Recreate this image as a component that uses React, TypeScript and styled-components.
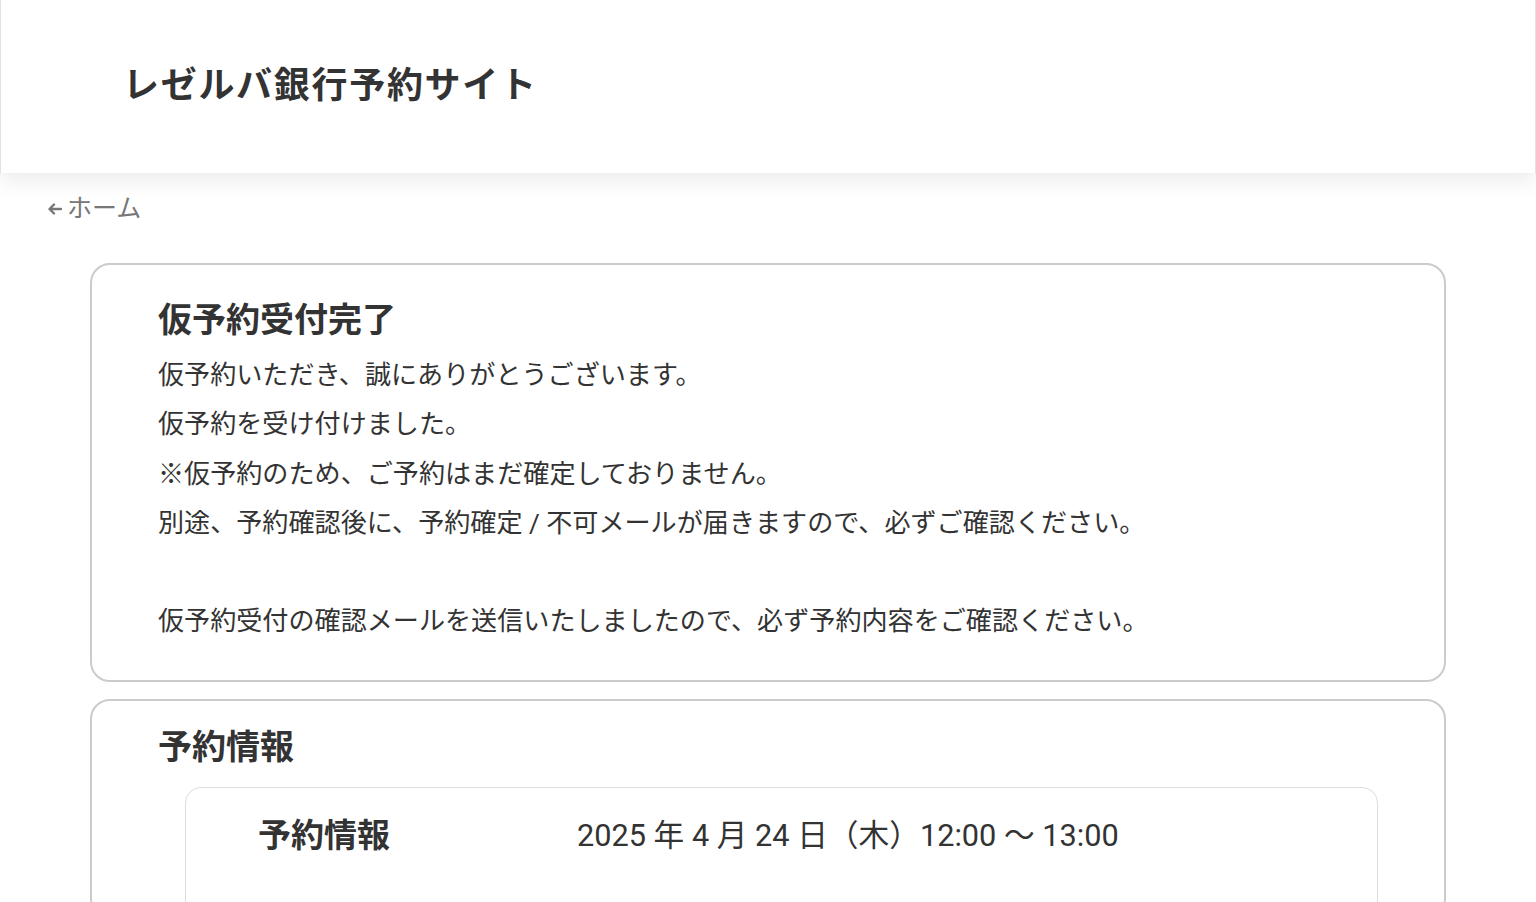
import React from 'react';
import styled, { createGlobalStyle } from 'styled-components';

const GlobalStyle = createGlobalStyle`
  body {
    margin: 0;
    background: #ffffff;
    font-family: Roboto, "Noto Sans CJK JP", sans-serif;
    color: #333333;
  }
`;

const messages = [
  '仮予約いただき、誠にありがとうございます。',
  '仮予約を受け付けました。',
  '※仮予約のため、ご予約はまだ確定しておりません。',
  '別途、予約確認後に、予約確定 / 不可メールが届きますので、必ずご確認ください。',
  '',
  '仮予約受付の確認メールを送信いたしましたので、必ず予約内容をご確認ください。'
];

const App: React.FC = () => {
  return (
    <>
      <GlobalStyle />
      <Header>
        <SiteTitle>レゼルバ銀行予約サイト</SiteTitle>
      </Header>
      <BackLink href="#">
        <svg width="14" height="12" viewBox="0 0 14 12" fill="none">
          <path
            d="M13 6H2M6 1.5L1.5 6L6 10.5"
            stroke="#777"
            strokeWidth="2.4"
            strokeLinecap="round"
            strokeLinejoin="round"
          />
        </svg>
        ホーム
      </BackLink>
      <Main>
        <Card topPad={27} bottomPad={33}>
          <CardTitle>仮予約受付完了</CardTitle>
          {messages.map((line, i) => (
            <Message key={i}>{line || '\u00a0'}</Message>
          ))}
        </Card>
        <Card topPad={18} bottomPad={0}>
          <CardTitle>予約情報</CardTitle>
          <InfoBox>
            <InfoRow>
              <InfoLabel>予約情報</InfoLabel>
              <InfoValue>2025 年 4 月 24 日（木）12:00 〜 13:00</InfoValue>
            </InfoRow>
          </InfoBox>
        </Card>
      </Main>
    </>
  );
};

const Header = styled.header`
  height: 173px;
  box-sizing: border-box;
  display: flex;
  align-items: center;
  padding: 0 0 9px 122px;
  background: #ffffff;
  border-left: 1px solid #e2e2e2;
  border-right: 1px solid #e2e2e2;
  box-shadow: 0 6px 22px rgba(0, 0, 0, 0.09);
  position: relative;
`;

const SiteTitle = styled.h1`
  margin: 0;
  font-size: 36px;
  font-weight: 700;
  letter-spacing: 1.7px;
  color: #333333;
`;

const BackLink = styled.a`
  display: flex;
  align-items: center;
  gap: 5px;
  margin: 22px 0 0 48px;
  width: max-content;
  font-size: 25px;
  line-height: 28px;
  color: #777777;
  text-decoration: none;
`;

const Main = styled.main`
  display: flex;
  flex-direction: column;
  gap: 17px;
  margin: 40px 90px 0 90px;
`;

const Card = styled.section<{ topPad: number; bottomPad: number }>`
  border: 2px solid #cbcbcb;
  border-radius: 20px;
  padding: ${p => p.topPad}px 66px ${p => p.bottomPad}px 66px;
`;

const CardTitle = styled.h2`
  margin: 0 0 3px 0;
  font-size: 34px;
  line-height: 56px;
  font-weight: 700;
  color: #333333;
`;

const Message = styled.p`
  margin: 0;
  font-size: 26.1px;
  line-height: 49.3px;
  color: #333333;
`;

const InfoBox = styled.div`
  margin: 12px 0 0 27px;
  border: 1px solid #dddddd;
  border-radius: 16px;
  padding: 28px 72px 60px 72px;
`;

const InfoRow = styled.div`
  display: flex;
  align-items: center;
`;

const InfoLabel = styled.div`
  width: 319px;
  font-size: 33px;
  line-height: 40px;
  font-weight: 700;
  color: #333333;
`;

const InfoValue = styled.div`
  font-size: 30.7px;
  line-height: 40px;
  color: #333333;
`;

export default App;
